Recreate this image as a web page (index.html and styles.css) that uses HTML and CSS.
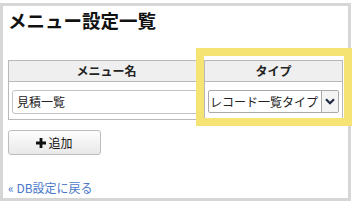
FILE: index.html
```html
<!DOCTYPE html>
<html lang="ja">
<head>
  <meta charset="UTF-8">
  <title>メニュー設定一覧</title>
  <link rel="stylesheet" href="styles.css">
</head>
<body>

  <section class="panel">
    <h1>メニュー設定一覧</h1>

    <table class="menu-table">
      <thead>
        <tr>
          <th class="col-name">メニュー名</th>
          <th class="col-type">タイプ</th>
        </tr>
      </thead>
      <tbody>
        <tr>
          <td><input type="text" class="text-input" value="見積一覧"></td>
          <td>
            <div class="select-box">
              <select>
                <option>レコード一覧タイプ</option>
              </select>
              <span class="select-arrow">
                <svg width="10" height="7" viewBox="0 0 10 7"><path d="M1 1.2 L5 5.2 L9 1.2" fill="none" stroke="#1f2a44" stroke-width="2.2"/></svg>
              </span>
            </div>
          </td>
        </tr>
      </tbody>
    </table>

    <button type="button" class="add-btn">
      <svg width="10" height="10" viewBox="0 0 10 10"><path d="M3.6 0h2.8v3.6H10v2.8H6.4V10H3.6V6.4H0V3.6h3.6z" fill="#111"/></svg>
      追加
    </button>

    <a class="back-link" href="#">« DB設定に戻る</a>

    <div class="highlight"></div>
  </section>

</body>
</html>
```
FILE: styles.css
```css
body {
  margin: 0;
  background: #fff;
  font-family: "Noto Sans CJK JP", "Noto Sans", sans-serif;
  font-size: 12px;
  color: #222;
}

.panel {
  position: relative;
  box-sizing: border-box;
  width: 351px;
  height: 198px;
  margin-top: 3px;
  border: 3px solid #d6d6d6;
  padding: 0 5px;
  background: #fff;
}

h1 {
  margin: 2px 0 0;
  font-size: 18.5px;
  line-height: 24px;
  font-weight: bold;
  color: #111;
}

.menu-table {
  width: 335px;
  margin-top: 28px;
  border-collapse: collapse;
  border: 1px solid #b8b8b8;
}

.menu-table th {
  height: 20px;
  padding: 0;
  background: #efefef;
  border: 1px solid #b8b8b8;
  font-size: 12px;
  font-weight: bold;
  line-height: 20px;
  text-align: center;
}

.col-name {
  width: 195px;
}

.menu-table td {
  height: 35px;
  padding: 2px 3px 0;
  border: 1px solid #b8b8b8;
  border-top: none;
  vertical-align: middle;
}

.text-input {
  box-sizing: border-box;
  width: 188px;
  height: 24px;
  padding: 0 4px;
  border: 1px solid #c4c4c4;
  border-radius: 3px;
  font-family: inherit;
  font-size: 12px;
  color: #222;
}

.select-box {
  display: flex;
  box-sizing: border-box;
  width: 131px;
  height: 23px;
  border: 1px solid #a9a9a9;
  border-radius: 2px;
  background: #fff;
}

.select-box select {
  flex: 1;
  min-width: 0;
  appearance: none;
  border: none;
  background: transparent;
  padding: 0 0 0 1px;
  font-family: inherit;
  font-size: 12px;
  color: #222;
}

.select-arrow {
  display: flex;
  align-items: center;
  justify-content: center;
  width: 16px;
  border-left: 1px solid #a9a9a9;
  background: #f4f4f4;
}

.add-btn {
  display: flex;
  align-items: center;
  justify-content: center;
  gap: 2px;
  box-sizing: border-box;
  width: 93px;
  height: 25px;
  margin-top: 10px;
  padding: 0;
  border: 1px solid #bdbdbd;
  border-radius: 3px;
  background: linear-gradient(#fdfdfd, #e9e9e9);
  font-family: inherit;
  font-size: 12px;
  color: #111;
}

.back-link {
  display: block;
  margin-top: 25px;
  font-size: 12px;
  line-height: 16px;
  color: #4a78c8;
  text-decoration: none;
}

.highlight {
  position: absolute;
  left: 193px;
  top: 42px;
  box-sizing: border-box;
  width: 156px;
  height: 78px;
  border: 8px solid #f5e474;
}
```
